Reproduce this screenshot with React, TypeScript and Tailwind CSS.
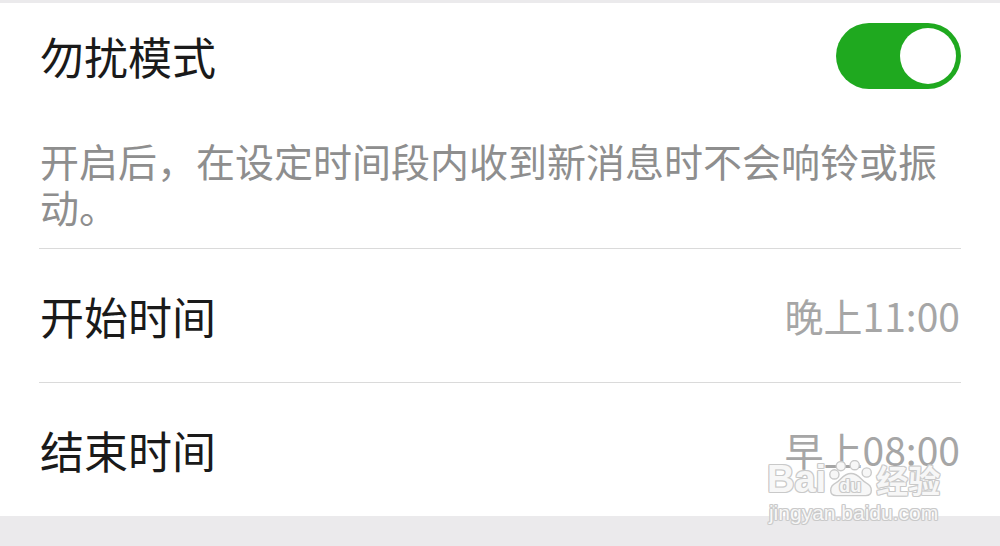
import React from "react";

const cjk = { fontFamily: '"Noto Sans CJK SC", "Noto Sans", sans-serif' };
const outline = {
  fontFamily: '"Liberation Sans", "Noto Sans CJK SC", sans-serif',
  color: "#f7f7f7",
  textShadow:
    "1px 0 0 #c9c9c9, -1px 0 0 #c9c9c9, 0 1px 0 #c9c9c9, 0 -1px 0 #c9c9c9, 1px 1px 0 #d4d4d4, -1px -1px 0 #d4d4d4, 1px -1px 0 #d4d4d4, -1px 1px 0 #d4d4d4",
};

export default function App() {
  return (
    <div className="relative w-[1000px] h-[546px] overflow-hidden bg-white" style={cjk}>
      <div className="h-[3px] bg-[#ebeaec]" />
      <div className="flex h-[105px] items-center justify-between pl-[40px] pr-[39px]">
        <span className="text-[44px] leading-none text-[#1a1a1a]">勿扰模式</span>
        <div className="flex h-[66px] w-[125px] items-center justify-end rounded-full bg-[#1fa91f] pr-[5px]">
          <div className="h-[56px] w-[56px] rounded-full bg-white" />
        </div>
      </div>
      <div className="px-[40px] pt-[29px] pb-[19px] text-[39px] leading-[46px] text-[#8e8e8e]">
        开启后，在设定时间段内收到新消息时不会响铃或振动。
      </div>
      <div className="mx-[39px] h-px bg-[#dadada]" />
      <div className="flex h-[133px] items-center justify-between pl-[40px] pr-[40px]">
        <span className="text-[44px] leading-none text-[#1a1a1a]">开始时间</span>
        <span className="text-[39px] leading-none text-[#a6a6a6]">晚上11:00</span>
      </div>
      <div className="mx-[39px] h-px bg-[#dadada]" />
      <div className="flex h-[133px] items-center justify-between pl-[40px] pr-[40px]">
        <span className="text-[44px] leading-none text-[#1a1a1a]">结束时间</span>
        <span className="text-[39px] leading-none text-[#a6a6a6]">早上08:00</span>
      </div>
      <div className="h-[30px] bg-[#ebeaec]" />

      <div className="absolute left-[767px] top-[460px] flex flex-col items-center">
        <div className="flex items-center">
          <span className="text-[38px] leading-none font-bold" style={outline}>
            Bai
          </span>
          <div className="relative mx-[1px] h-[38px] w-[48px]">
            <svg width="48" height="38" viewBox="0 0 52 40" className="absolute left-0 top-0">
              <g fill="#f7f7f7" stroke="#c9c9c9" strokeWidth="1.5">
                <ellipse cx="15" cy="6" rx="5" ry="5" />
                <ellipse cx="30" cy="5" rx="5" ry="5" />
                <ellipse cx="43" cy="13" rx="5" ry="5" />
                <ellipse cx="8" cy="15" rx="5" ry="5" />
                <path d="M10 38 C2 38 2 28 10 24 C16 20 18 14 26 14 C34 14 36 20 42 24 C50 28 50 38 42 38 Z" />
              </g>
            </svg>
            <span
              className="absolute left-[12px] top-[17px] text-[18px] leading-none font-bold"
              style={outline}
            >
              du
            </span>
          </div>
          <span
            className="text-[32px] leading-none font-bold"
            style={{ ...outline, fontFamily: '"Noto Sans CJK SC", sans-serif' }}
          >
            经验
          </span>
        </div>
        <span className="mt-[4px] text-[21px] leading-none" style={outline}>
          jingyan.baidu.com
        </span>
      </div>
    </div>
  );
}
